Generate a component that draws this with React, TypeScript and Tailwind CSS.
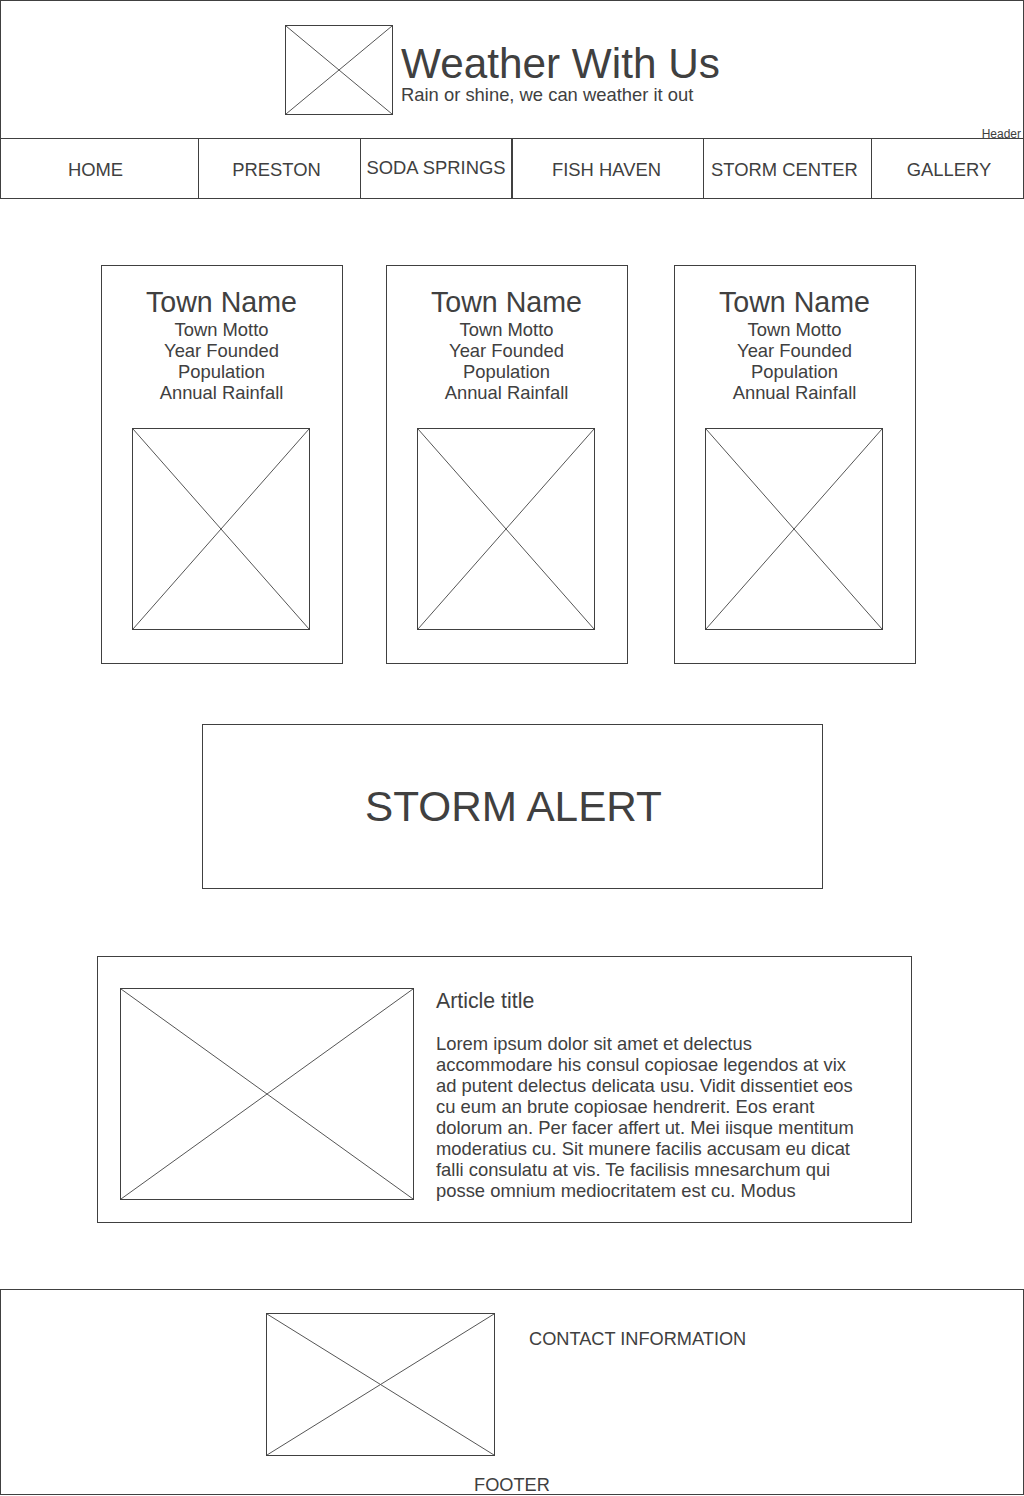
import React from "react";

function XBox({ className }: { className: string }) {
  return (
    <div className={`border border-[#404040] shrink-0 ${className}`}>
      <svg className="block w-full h-full" viewBox="0 0 100 100" preserveAspectRatio="none">
        <line x1="0" y1="0" x2="100" y2="100" stroke="#555" strokeWidth="1" vectorEffect="non-scaling-stroke" />
        <line x1="100" y1="0" x2="0" y2="100" stroke="#555" strokeWidth="1" vectorEffect="non-scaling-stroke" />
      </svg>
    </div>
  );
}

function Card({ className }: { className: string }) {
  return (
    <div className={`w-[242px] h-[399px] border border-[#404040] pt-[20px] ${className}`}>
      <div className="text-center text-[28.6px] leading-[32px] pr-[1px]">Town Name</div>
      <div className="mt-[1px] text-center text-[18.4px] leading-[21px] pr-[1px]">
        <div>Town Motto</div>
        <div>Year Founded</div>
        <div>Population</div>
        <div>Annual Rainfall</div>
      </div>
      <XBox className="mt-[25px] ml-[30px] w-[178px] h-[202px]" />
    </div>
  );
}

const navItems: { label: string; cls: string }[] = [
  { label: "HOME", cls: "w-[198px] border-r pt-[21px] pr-[8px]" },
  { label: "PRESTON", cls: "w-[162px] border-r pt-[21px] pr-[6px]" },
  { label: "SODA SPRINGS", cls: "w-[152px] border-r-2 pt-[19px]" },
  { label: "FISH HAVEN", cls: "w-[191px] border-r pt-[21px] pr-[3px]" },
  { label: "STORM CENTER", cls: "w-[168px] border-r pt-[21px] pr-[6px]" },
  { label: "GALLERY", cls: "w-[151px] pt-[21px] pl-[3px]" },
];

const articleLines = [
  "Lorem ipsum dolor sit amet et delectus",
  "accommodare his consul copiosae legendos at vix",
  "ad putent delectus delicata usu. Vidit dissentiet eos",
  "cu eum an brute copiosae hendrerit. Eos erant",
  "dolorum an. Per facer affert ut. Mei iisque mentitum",
  "moderatius cu. Sit munere facilis accusam eu dicat",
  "falli consulatu at vis. Te facilisis mnesarchum qui",
  "posse omnium mediocritatem est cu. Modus",
];

export default function App() {
  return (
    <div className="w-[1024px] h-[1496px] bg-white text-[#404040] font-['Liberation_Sans',Arial,sans-serif] overflow-hidden">
      <header className="border-x border-t border-[#404040]">
        <div className="relative h-[137px] flex pl-[284px] pt-[24px]">
          <XBox className="w-[108px] h-[90px]" />
          <div className="ml-[8px] mt-[15px]">
            <div className="text-[42.3px] leading-[47px] whitespace-nowrap">Weather With Us</div>
            <div className="mt-[1px] text-[18.4px] leading-[14px] whitespace-nowrap">Rain or shine, we can weather it out</div>
          </div>
          <div className="absolute right-[2px] bottom-[-3px] text-[12px] leading-[14px]">Header</div>
        </div>
        <nav className="flex h-[61px] border-y border-[#404040]">
          {navItems.map((n) => (
            <div key={n.label} className={`${n.cls} border-[#404040] text-center text-[18.4px] leading-[20px] whitespace-nowrap`}>
              {n.label}
            </div>
          ))}
        </nav>
      </header>

      <div className="flex mt-[66px] pl-[101px]">
        <Card className="" />
        <Card className="ml-[43px]" />
        <Card className="ml-[46px]" />
      </div>

      <div className="mt-[60px] ml-[202px] w-[621px] h-[165px] border border-[#404040] flex items-center justify-center text-[42.3px] leading-[48px] pl-[2px]">
        STORM ALERT
      </div>

      <div className="mt-[67px] ml-[97px] w-[815px] h-[267px] border border-[#404040] flex pl-[22px] pt-[31px]">
        <XBox className="w-[294px] h-[212px]" />
        <div className="ml-[22px] mt-[1px]">
          <div className="text-[21.3px] leading-[24px]">Article title</div>
          <div className="mt-[20px] text-[18.4px] leading-[21px] whitespace-nowrap">
            {articleLines.map((l) => (
              <div key={l}>{l}</div>
            ))}
          </div>
        </div>
      </div>

      <footer className="mt-[66px] w-[1024px] h-[206px] border border-[#404040] pt-[23px]">
        <div className="flex pl-[265px]">
          <XBox className="w-[229px] h-[143px]" />
          <div className="ml-[34px] mt-[16px] text-[18.2px] leading-[20px] whitespace-nowrap">CONTACT INFORMATION</div>
        </div>
        <div className="mt-[20px] text-center text-[18.2px] leading-[18px]">FOOTER</div>
      </footer>
    </div>
  );
}
